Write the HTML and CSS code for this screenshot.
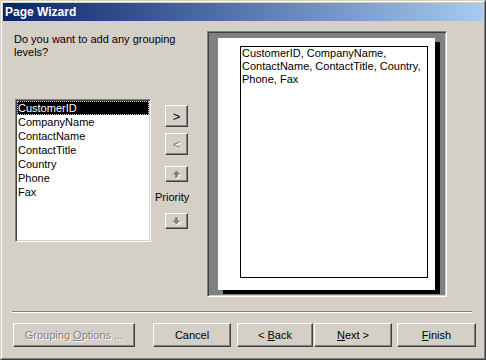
FILE: index.html
```html
<!DOCTYPE html>
<html>
<head>
<meta charset="utf-8">
<link rel="stylesheet" href="styles.css">
</head>
<body>
<div class="window">
  <div class="frame">
    <div class="titlebar">Page Wizard</div>
    <div class="body">
      <div class="main">
        <div class="left">
          <p class="question">Do you want to add any grouping levels?</p>
          <div class="picker">
            <ul class="list">
              <li class="selected"><span>CustomerID</span></li>
              <li>CompanyName</li>
              <li>ContactName</li>
              <li>ContactTitle</li>
              <li>Country</li>
              <li>Phone</li>
              <li>Fax</li>
            </ul>
            <div class="movers">
              <div class="btn small add"><span>&gt;</span></div>
              <div class="btn small remove disabled"><span>&lt;</span></div>
              <div class="btn small arrow up">
                <svg width="9" height="8" viewBox="0 0 9 8"><polygon points="4.5,0.5 8.5,4.5 6,4.5 6,7.5 3,7.5 3,4.5 0.5,4.5" fill="#808080"/></svg>
              </div>
              <div class="priority">Priority</div>
              <div class="btn small arrow down">
                <svg width="9" height="8" viewBox="0 0 9 8"><polygon points="3,0.5 6,0.5 6,3.5 8.5,3.5 4.5,7.5 0.5,3.5 3,3.5" fill="#808080"/></svg>
              </div>
            </div>
          </div>
        </div>
        <div class="preview">
          <div class="page">
            <div class="group">CustomerID, CompanyName, ContactName, ContactTitle, Country, Phone, Fax</div>
          </div>
        </div>
      </div>
      <div class="sep"></div>
      <div class="actions">
        <div class="btn wide disabled"><span>Grouping <u>O</u>ptions ...</span></div>
        <div class="btn cancel"><span>Cancel</span></div>
        <div class="btn back"><span>&lt; <u>B</u>ack</span></div>
        <div class="btn next"><span><u>N</u>ext &gt;</span></div>
        <div class="btn finish"><span><u>F</u>inish</span></div>
      </div>
    </div>
  </div>
</div>
</body>
</html>
```
FILE: styles.css
```css
* { box-sizing: border-box; }
html, body {
  margin: 0;
  padding: 0;
  background: #d4d0c8;
}
body {
  width: 486px;
  height: 360px;
  overflow: hidden;
  font-family: "Liberation Sans", Arial, sans-serif;
  font-size: 11px;
  color: #000;
}
.window {
  width: 486px;
  height: 360px;
  border: 1px solid;
  border-color: #d4d0c8 #404040 #404040 #d4d0c8;
}
.frame {
  height: 100%;
  border: 1px solid;
  border-color: #ffffff #808080 #808080 #ffffff;
  padding: 1px;
  display: flex;
  flex-direction: column;
}
.titlebar {
  height: 18px;
  background: linear-gradient(to right, #0a246a, #a6caf0);
  color: #fff;
  font-weight: bold;
  font-size: 12px;
  line-height: 18px;
  padding-left: 2px;
}
.body {
  flex: 1;
  background: #d4d0c8;
}
.main {
  display: flex;
  padding-top: 10px;
  height: 276px;
}
.left {
  width: 193px;
  margin-left: 11px;
  flex-shrink: 0;
}
.question {
  margin: 2px 0 0 0;
  width: 180px;
  line-height: 13px;
}
.picker {
  display: flex;
  margin-top: 40px;
  margin-left: 1px;
}
.list {
  list-style: none;
  margin: 0;
  padding: 0;
  width: 136px;
  height: 143px;
  flex-shrink: 0;
  background: #fff;
  border: 1px solid;
  border-color: #808080 #ffffff #ffffff #808080;
  box-shadow: inset 1px 1px 0 #404040, inset -1px -1px 0 #d4d0c8;
  padding: 1px;
}
.list li {
  height: 14px;
  line-height: 14px;
  padding-left: 1px;
  white-space: nowrap;
}
.list li.selected {
  background: #000;
  color: #fff;
  outline: 1px dotted #d4d0c8;
  outline-offset: -1px;
}
.movers {
  width: 36px;
  margin-left: 4px;
  display: flex;
  flex-direction: column;
  align-items: flex-start;
  padding-top: 6px;
  flex-shrink: 0;
}
.btn {
  background: #d4d0c8;
  border: 1px solid;
  border-color: #ffffff #404040 #404040 #ffffff;
  box-shadow: inset -1px -1px 0 #808080;
  display: flex;
  align-items: center;
  justify-content: center;
  white-space: nowrap;
  flex-shrink: 0;
}
.btn.disabled {
  color: #808080;
  text-shadow: 1px 1px 0 #fff;
}
.btn.small {
  width: 23px;
  height: 22px;
  font-size: 13px;
  margin-left: 10px;
}
.btn.remove {
  margin-top: 6px;
}
.btn.arrow {
  height: 16px;
}
.btn.up {
  margin-top: 11px;
}
.btn.arrow svg {
  display: block;
  filter: drop-shadow(1px 1px 0 #fff);
}
.priority {
  margin-top: 9px;
  height: 13px;
  line-height: 13px;
  margin-bottom: 9px;
}
.preview {
  width: 240px;
  height: 266px;
  flex-shrink: 0;
  border: 1px solid;
  border-color: #808080 #ffffff #ffffff #808080;
  box-shadow: inset 1px 1px 0 #404040, inset -1px -1px 0 #d4d0c8;
  background: #808080;
  padding: 6px 0 0 10px;
}
.page {
  width: 217px;
  height: 252px;
  background: #fff;
  box-shadow: 5px 4px 0 #000;
  padding: 8px 0 0 22px;
}
.group {
  width: 188px;
  height: 232px;
  border: 1px solid #000;
  padding: 0 1px;
  line-height: 13px;
}
.sep {
  margin: 14px 0 0 9px;
  width: 460px;
  height: 2px;
  border-top: 1px solid #808080;
  border-bottom: 1px solid #ffffff;
}
.actions {
  display: flex;
  margin: 10px 0 0 10px;
}
.actions .btn {
  height: 24px;
}
.btn.wide { width: 122px; }
.btn.cancel { width: 78px; margin-left: 18px; }
.btn.back { width: 76px; margin-left: 6px; }
.btn.next { width: 78px; margin-left: 1px; }
.btn.finish { width: 79px; margin-left: 5px; }
```
